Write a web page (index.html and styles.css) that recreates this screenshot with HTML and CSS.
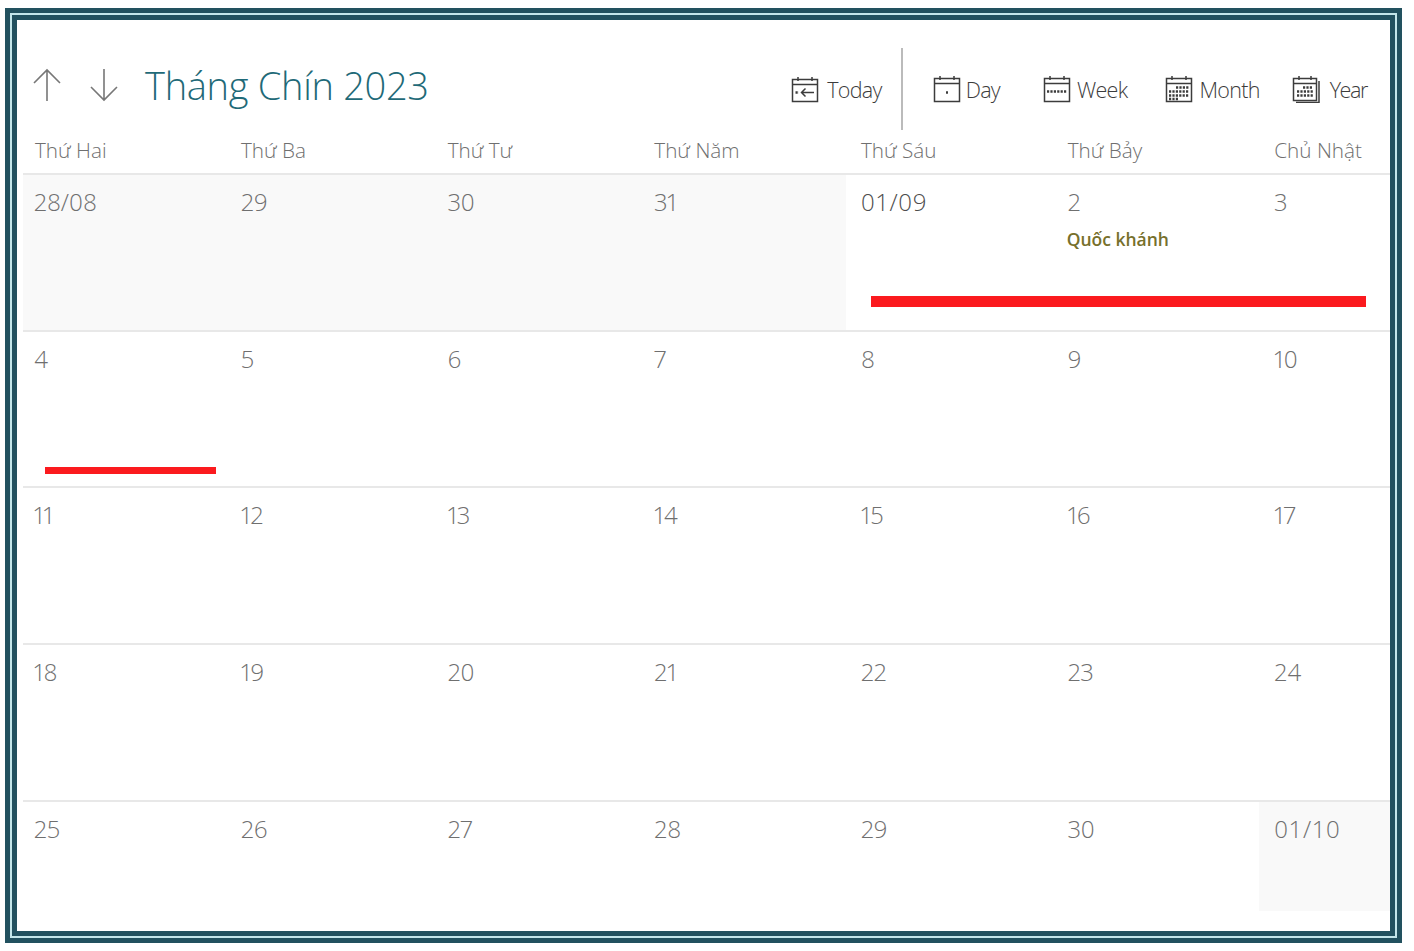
FILE: index.html
```html
<!DOCTYPE html>
<html lang="en">
<head>
    <meta charset="UTF-8">
    <title>Tháng Chín 2023</title>
    <link rel="stylesheet" href="styles.css">
</head>
<body>
    <div class="frame">
        <div class="frame-line">
            <div class="frame-inner">
                <div class="page">
                    <div class="topbar">
                        <button class="nav-btn nav-up" aria-label="Previous">
                            <svg width="30" height="34" viewBox="0 0 30 34"><path d="M15 33V2M2 15L15 2l13 13"/></svg>
                        </button>
                        <button class="nav-btn nav-down" aria-label="Next">
                            <svg width="30" height="34" viewBox="0 0 30 34"><path d="M15 1v31M2 19l13 13 13-13"/></svg>
                        </button>
                        <h1 class="title">Tháng Chín 2023</h1>
                        <div class="toolbar">
                            <div class="tool tool-today">
                                <svg class="cal" width="28" height="28" viewBox="0 0 28 28"><path d="M1.500 4.500h25v22h-25zM1.500 9.500h25M7 2v4M21 2v4M23 17.500H10.500M14.500 13.500l-4 4 4 4"/><path class="dots" d="M4.500 17.500h3.500"/></svg>
                                <span>Today</span>
                            </div>
                            <div class="divider"></div>
                            <div class="tool tool-day">
                                <svg class="cal" width="28" height="28" viewBox="0 0 28 28"><path d="M1.500 3.500h25v23h-25zM1.500 8.500h25M7 1v4M21 1v4"/><path class="dots" d="M13 17.500h2"/></svg>
                                <span>Day</span>
                            </div>
                            <div class="tool tool-week">
                                <svg class="cal" width="28" height="28" viewBox="0 0 28 28"><path d="M1.500 3.500h25v23h-25zM1.500 8.500h25M7 1v4M21 1v4"/><path class="dots" d="M4 16.500h20"/></svg>
                                <span>Week</span>
                            </div>
                            <div class="tool tool-month">
                                <svg class="cal" width="28" height="28" viewBox="0 0 28 28"><path d="M1.500 3.500h25v23h-25zM1.500 8.500h25M7 1v4M21 1v4"/><path class="dots" d="M11 12.500h13M4 16.500h20M4 20.500h20M4 24h10"/></svg>
                                <span>Month</span>
                            </div>
                            <div class="tool tool-year">
                                <svg class="cal" width="28" height="28" viewBox="0 0 28 28"><path d="M1.500 3.500h23v22h-23zM1.500 8.500h23M7 1v4M19 1v4M27 6v21.500H4"/><path class="dots" d="M11 12.500h10M5 16.500h16M5 20.500h16"/></svg>
                                <span>Year</span>
                            </div>
                        </div>
                    </div>

                    <div class="calendar">
                        <div class="day-name first">Thứ Hai</div>
                        <div class="day-name">Thứ Ba</div>
                        <div class="day-name">Thứ Tư</div>
                        <div class="day-name">Thứ Năm</div>
                        <div class="day-name">Thứ Sáu</div>
                        <div class="day-name">Thứ Bảy</div>
                        <div class="day-name">Chủ Nhật</div>

                        <div class="cell first other">28/08</div>
                        <div class="cell other">29</div>
                        <div class="cell other">30</div>
                        <div class="cell other">31</div>
                        <div class="cell current wide">01/09</div>
                        <div class="cell">2<div class="holiday">Quốc khánh</div></div>
                        <div class="cell">3</div>

                        <div class="cell first">4</div>
                        <div class="cell">5</div>
                        <div class="cell">6</div>
                        <div class="cell">7</div>
                        <div class="cell">8</div>
                        <div class="cell">9</div>
                        <div class="cell">10</div>

                        <div class="cell first">11</div>
                        <div class="cell">12</div>
                        <div class="cell">13</div>
                        <div class="cell">14</div>
                        <div class="cell">15</div>
                        <div class="cell">16</div>
                        <div class="cell">17</div>

                        <div class="cell first">18</div>
                        <div class="cell">19</div>
                        <div class="cell">20</div>
                        <div class="cell">21</div>
                        <div class="cell">22</div>
                        <div class="cell">23</div>
                        <div class="cell">24</div>

                        <div class="cell first">25</div>
                        <div class="cell">26</div>
                        <div class="cell">27</div>
                        <div class="cell">28</div>
                        <div class="cell">29</div>
                        <div class="cell">30</div>
                        <div class="cell other wide">01/10</div>

                        <div class="mark mark-long"></div>
                        <div class="mark mark-short"></div>
                    </div>
                </div>
            </div>
        </div>
    </div>
</body>
</html>
```

FILE: styles.css
```css
body {
    margin: 0;
    background: #fff;
    font-family: "Open Sans", "Noto Sans", sans-serif;
    font-weight: 300;
    color: #777;
}
.frame {
    box-sizing: border-box;
    width: 1397px;
    height: 935px;
    margin: 8px 0 0 5px;
    border: 5px solid #22515f;
}
.frame-line {
    box-sizing: border-box;
    height: 100%;
    border: 2px solid #c4e6ea;
}
.frame-inner {
    box-sizing: border-box;
    height: 100%;
    border: 5px solid #22515f;
    background: #fff;
}
.page {
    padding-left: 6px;
}
.topbar {
    display: flex;
    align-items: center;
    height: 110px;
    padding-top: 28px;
    box-sizing: border-box;
}
.nav-btn {
    padding: 0;
    border: none;
    background: none;
    display: flex;
}
.nav-btn path {
    fill: none;
    stroke: #777;
    stroke-width: 1.6;
}
.nav-up {
    margin-left: 9px;
    margin-top: -8px;
}
.nav-down {
    margin-left: 27px;
    margin-top: -8px;
}
.title {
    margin: -8px 0 0 26px;
    font-size: 38px;
    line-height: 50px;
    font-weight: 300;
    letter-spacing: -0.3px;
    color: #1f6a78;
    white-space: nowrap;
}
.toolbar {
    display: flex;
    align-items: center;
    height: 82px;
    margin-left: auto;
}
.tool {
    display: flex;
    align-items: center;
    font-size: 21.5px;
    letter-spacing: -0.7px;
    color: #3c3c3c;
}
.tool span {
    margin-left: 6px;
}
.cal path {
    fill: none;
    stroke: #3c3c3c;
    stroke-width: 1.5;
}
.cal .dots {
    stroke-width: 2.4;
    stroke-dasharray: 2.2 1.2;
}
.divider {
    width: 2px;
    height: 82px;
    margin: 0 30px 0 19px;
    background: #bbb;
}
.tool-today span {
    margin-left: 8px;
}
.tool-day span {
    margin-left: 5px;
}
.tool-week {
    margin-left: 43px;
}
.tool-month {
    margin-left: 38px;
}
.tool-year {
    margin-left: 32px;
    margin-right: 23px;
    letter-spacing: -1.4px;
}
.tool-year span {
    margin-left: 10px;
}
.calendar {
    position: relative;
    display: grid;
    grid-template-columns: 203px repeat(5, 206.67px) 1fr;
    grid-template-rows: 43px repeat(4, 156.7px) 111px;
}
.day-name {
    padding-left: 15px;
    font-size: 20.7px;
    line-height: 41px;
    color: #6f6f6f;
}
.day-name.first {
    padding-left: 12px;
}
.cell {
    padding: 12px 0 0 15px;
    border-top: 2px solid #e8e8e8;
    font-size: 24px;
    line-height: 30px;
    font-variant-numeric: proportional-nums;
    color: #6f6f6f;
}
.cell.first {
    padding-left: 11px;
}
.cell.other {
    background: #f9f9f9;
}
.cell.current {
    color: #4d4d4d;
}
.cell.wide {
    font-variant-numeric: normal;
    letter-spacing: 0.6px;
}
.holiday {
    margin: 10px 0 0 -1px;
    font-size: 17.5px;
    line-height: 24px;
    font-weight: 600;
    color: #77702c;
    letter-spacing: 0;
}
.mark {
    position: absolute;
    background: #fb1a1e;
}
.mark-long {
    left: 848px;
    top: 166px;
    width: 495px;
    height: 11px;
}
.mark-short {
    left: 22px;
    top: 337px;
    width: 171px;
    height: 7px;
}
```
